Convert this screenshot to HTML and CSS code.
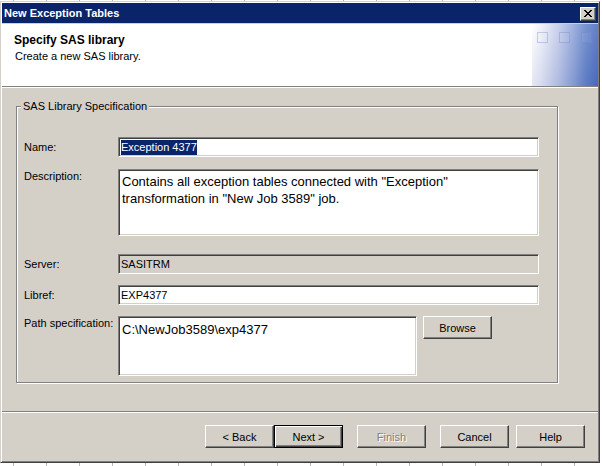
FILE: index.html
```html
<!DOCTYPE html>
<html>
<head>
<meta charset="utf-8">
<title>New Exception Tables</title>
<link rel="stylesheet" href="styles.css">
</head>
<body>
<div class="window">
  <div class="titlebar">
    <span class="title">New Exception Tables</span>
    <button class="close" aria-label="Close">
      <svg width="8" height="7" viewBox="0 0 8 7" shape-rendering="crispEdges">
        <path d="M0 0h2v1h-2zM6 0h2v1h-2zM1 1h2v1h-2zM5 1h2v1h-2zM2 2h4v1h-4zM3 3h2v1h-2zM2 4h4v1h-4zM1 5h2v1h-2zM5 5h2v1h-2zM0 6h2v1h-2zM6 6h2v1h-2z" fill="#000"/>
      </svg>
    </button>
  </div>
  <div class="header">
    <div class="header-text">
      <div class="h-title">Specify SAS library</div>
      <div class="h-sub">Create a new SAS library.</div>
    </div>
    <div class="deco"><span class="sq"></span><span class="sq"></span><span class="sq"></span></div>
  </div>
  <div class="content">
    <div class="main">
      <fieldset class="group">
        <legend>SAS Library Specification</legend>
        <div class="row">
          <span class="label">Name:</span>
          <div class="field"><span class="sel">Exception 4377</span></div>
        </div>
        <div class="row tall row-desc">
          <span class="label">Description:</span>
          <div class="area area-desc">Contains all exception tables connected with "Exception"<br>transformation in "New Job 3589" job.</div>
        </div>
        <div class="row row-server">
          <span class="label">Server:</span>
          <div class="field disabled">SASITRM</div>
        </div>
        <div class="row row-libref">
          <span class="label">Libref:</span>
          <div class="field">EXP4377</div>
        </div>
        <div class="row tall row-path">
          <span class="label">Path specification:</span>
          <div class="area area-path">C:\NewJob3589\exp4377</div>
          <button class="btn browse">Browse</button>
        </div>
      </fieldset>
    </div>
    <div class="footer">
      <button class="btn">&lt; Back</button>
      <button class="btn default">Next &gt;</button>
      <button class="btn disabled-btn gap14">Finish</button>
      <button class="btn gap14">Cancel</button>
      <button class="btn gap7">Help</button>
    </div>
  </div>
</div>
</body>
</html>
```
FILE: styles.css
```css
html, body {
  margin: 0;
  padding: 0;
}
body {
  width: 602px;
  height: 466px;
  overflow: hidden;
  font-family: "Liberation Sans", Arial, sans-serif;
  font-size: 11px;
  color: #000;
  background-color: #fff;
  background-image:
    linear-gradient(to right, #b8b8b8 1px, transparent 1px);
  background-size: 33px 100%;
  background-position: 13px 0;
}
.window {
  box-sizing: border-box;
  width: 600px;
  height: 462px;
  margin-top: 1px;
  border: 1px solid;
  border-color: #d4d0c8 #404040 #404040 #d4d0c8;
  box-shadow: inset 1px 1px 0 #fff, inset -1px -1px 0 #808080;
  padding: 1px;
  background: #d4d0c8;
  display: flex;
  flex-direction: column;
}
.titlebar {
  height: 20px;
  flex: none;
  background: #0a246a;
  display: flex;
  align-items: flex-start;
  justify-content: space-between;
  margin-bottom: 1px;
}
.title {
  color: #fff;
  font-weight: bold;
  font-size: 11px;
  line-height: 20px;
  padding-left: 2px;
}
.close {
  box-sizing: border-box;
  width: 16px;
  height: 14px;
  margin: 4px 2px 0 0;
  padding: 0;
  background: #d4d0c8;
  border: 1px solid;
  border-color: #fff #404040 #404040 #fff;
  box-shadow: inset -1px -1px 0 #808080;
  display: flex;
  align-items: center;
  justify-content: center;
}
.close svg {
  display: block;
  margin: 0 1px 1px 0;
}
.header {
  flex: none;
  height: 62px;
  background: #fff;
  border-bottom: 1px solid #808080;
  display: flex;
  justify-content: space-between;
}
.header-text {
  padding: 9px 0 0 12px;
}
.h-title {
  font-weight: bold;
  font-size: 12px;
  line-height: 15px;
}
.h-sub {
  margin-top: 2px;
  padding-left: 1px;
  line-height: 13px;
}
.deco {
  width: 66px;
  display: flex;
  align-items: flex-start;
  gap: 11px;
  padding: 8px 0 0 5px;
  box-sizing: border-box;
  background:
    linear-gradient(to bottom, rgba(255,255,255,0.12), rgba(30,60,150,0.12)),
    linear-gradient(to right, #ffffff 0%, #eef0f9 14%, #c3cbea 40%, #93a7da 62%, #6584c8 82%, #4d6fc0 100%);
}
.sq {
  box-sizing: border-box;
  width: 11px;
  height: 11px;
  border: 1px solid rgba(110, 130, 200, 0.35);
  background: rgba(255, 255, 255, 0.06);
}
.content {
  flex: 1;
  border-top: 1px solid #fff;
  display: flex;
  flex-direction: column;
}
.main {
  height: 323px;
  padding: 12px 0 0 14px;
  box-sizing: border-box;
}
.group {
  box-sizing: border-box;
  width: 542px;
  margin: 0;
  padding: 24px 0 6px 0;
  min-width: 0;
  border: 1px solid #808080;
  box-shadow: inset 1px 1px 0 #fff, 1px 1px 0 #fff;
}
.group legend {
  margin-left: 4px;
  padding: 0 2px;
  line-height: 13px;
  font-size: 11px;
  background: #d4d0c8;
}
.row {
  display: flex;
  align-items: center;
  padding-left: 7px;
}
.row.tall {
  align-items: flex-start;
}
.row-desc { margin-top: 12px; }
.row-server { margin-top: 18px; }
.row-libref { margin-top: 11px; }
.row-path { margin-top: 11px; }
.label {
  width: 94px;
  flex: none;
  line-height: 13px;
}
.row.tall .label {
  padding-top: 1px;
}
.field, .area {
  box-sizing: border-box;
  background: #fff;
  border: 1px solid;
  border-color: #808080 #fff #fff #808080;
  box-shadow: inset 1px 1px 0 #404040, inset -1px -1px 0 #d4d0c8;
}
.field {
  width: 421px;
  height: 20px;
  padding: 1px 0 0 2px;
  line-height: 16px;
  font-size: 11px;
  white-space: nowrap;
}
.field.disabled {
  background: #d4d0c8;
}
.sel {
  background: #0a246a;
  color: #fff;
  display: inline-block;
  line-height: 15px;
}
.area {
  font-size: 13px;
  line-height: 17px;
  padding: 3px 0 0 3px;
}
.area-desc {
  width: 421px;
  height: 67px;
}
.area-path {
  width: 299px;
  height: 60px;
  padding-top: 4px;
}
.btn {
  box-sizing: border-box;
  width: 69px;
  height: 23px;
  padding: 0;
  font-family: "Liberation Sans", Arial, sans-serif;
  font-size: 11px;
  color: #000;
  background: #d4d0c8;
  border: 1px solid;
  border-color: #fff #404040 #404040 #fff;
  box-shadow: inset -1px -1px 0 #808080;
}
.btn.browse {
  margin-left: 6px;
}
.btn.default {
  border: 1px solid #000;
  box-shadow: inset 1px 1px 0 #fff, inset -1px -1px 0 #404040, inset -2px -2px 0 #808080;
}
.btn.disabled-btn {
  color: #808080;
  text-shadow: 1px 1px 0 #fff;
}
.gap14 { margin-left: 14px; }
.gap7 { margin-left: 7px; }
.footer {
  flex: 1;
  border-top: 1px solid #808080;
  box-shadow: inset 0 1px 0 #fff;
  display: flex;
  justify-content: flex-end;
  align-items: flex-start;
  padding: 13px 13px 0 0;
}
```
